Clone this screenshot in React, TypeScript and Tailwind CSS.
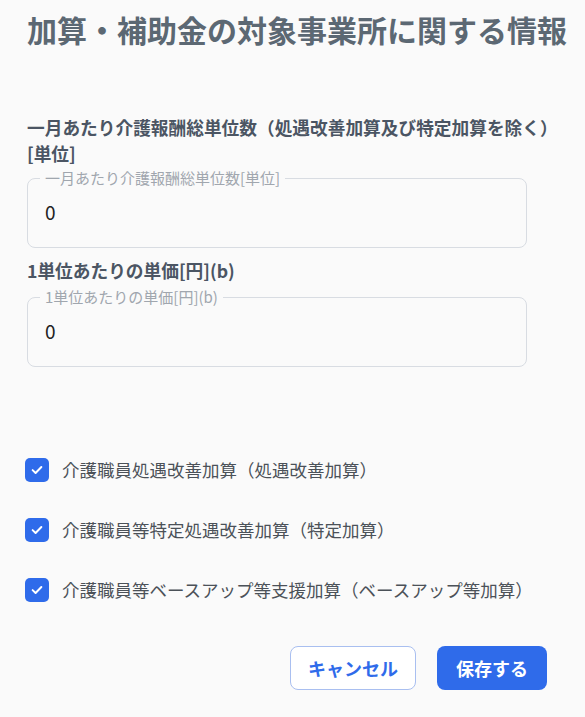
import { type ReactNode, useState } from "react";

const font = { fontFamily: '"Noto Sans CJK JP", "Noto Sans", sans-serif' };

function OutlinedField({ label, value, onChange }: { label: string; value: string; onChange: (v: string) => void }): ReactNode {
    return (
        <fieldset className="w-[500px] rounded-[8px] border border-[#d8dce2] pl-[17px] pr-4 pb-[21px]">
            <legend className="-ml-[5px] px-[5px] text-[15px] leading-[16px] text-[#a0a6ae]">{label}</legend>
            <input
                className="mt-[12px] h-[28px] w-full bg-transparent text-[19px] leading-[28px] text-[#222] outline-none"
                value={value}
                onChange={(e) => onChange(e.target.value)}
            />
        </fieldset>
    )
}

function CheckRow({ label, checked, onToggle }: { label: string; checked: boolean; onToggle: () => void }): ReactNode {
    return (
        <label className="flex h-[24px] cursor-pointer items-center gap-[13px]">
            <span
                onClick={onToggle}
                className={`flex h-[24px] w-[24px] items-center justify-center rounded-[5px] ${checked ? "bg-[#2f6bea]" : "border-2 border-[#9ca3af] bg-white"}`}
            >
                {checked && (
                    <svg width="12" height="10" viewBox="0 0 11 9" fill="none">
                        <path d="M1.5 4.6 L4.2 7.2 L9.5 1.8" stroke="white" strokeWidth="1.8" strokeLinecap="round" strokeLinejoin="round" />
                    </svg>
                )}
            </span>
            <span className="text-[17.5px] leading-[24px] text-[#4b5158]">{label}</span>
        </label>
    )
}

export default function App(): ReactNode {
    const [units, setUnits] = useState("0")
    const [price, setPrice] = useState("0")
    const [checks, setChecks] = useState([true, true, true])

    const items = [
        "介護職員処遇改善加算（処遇改善加算）",
        "介護職員等特定処遇改善加算（特定加算）",
        "介護職員等ベースアップ等支援加算（ベースアップ等加算）",
    ]

    return (
        <div className="min-h-[717px] w-full bg-[#fafafa] pl-[27px] pt-[10px]" style={font}>
            <h1 className="text-[30px] font-bold leading-[38px] text-[#5c6873]">
                加算・補助金の対象事業所に関する情報
            </h1>

            <div className="mt-[66px] w-[545px] text-[17.7px] font-bold leading-[26px] text-[#4b5563]">
                一月あたり介護報酬総単位数（処遇改善加算及び特定加算を除く）[単位]
            </div>
            <div className="mt-[4px]">
                <OutlinedField label="一月あたり介護報酬総単位数[単位]" value={units} onChange={setUnits} />
            </div>

            <div className="mt-[9px] text-[17.7px] font-bold leading-[26px] text-[#4b5563]">
                1単位あたりの単価[円](b)
            </div>
            <div className="mt-[6px]">
                <OutlinedField label="1単位あたりの単価[円](b)" value={price} onChange={setPrice} />
            </div>

            <div className="mt-[91px] flex flex-col gap-[36px]">
                {items.map((item, i) => (
                    <div key={item} className="-ml-[2px]">
                        <CheckRow
                            label={item}
                            checked={checks[i]}
                            onToggle={() => setChecks((c) => c.map((v, j) => (j === i ? !v : v)))}
                        />
                    </div>
                ))}
            </div>

            <div className="mt-[44px] flex justify-end gap-[21px] pr-[38px]">
                <button className="h-[44px] w-[126px] rounded-[8px] border border-[#a9bff0] bg-white text-[18px] font-bold text-[#2f6bea]">
                    キャンセル
                </button>
                <button className="h-[44px] w-[110px] rounded-[8px] bg-[#2f6bea] text-[18px] font-bold text-white">
                    保存する
                </button>
            </div>
        </div>
    )
}
